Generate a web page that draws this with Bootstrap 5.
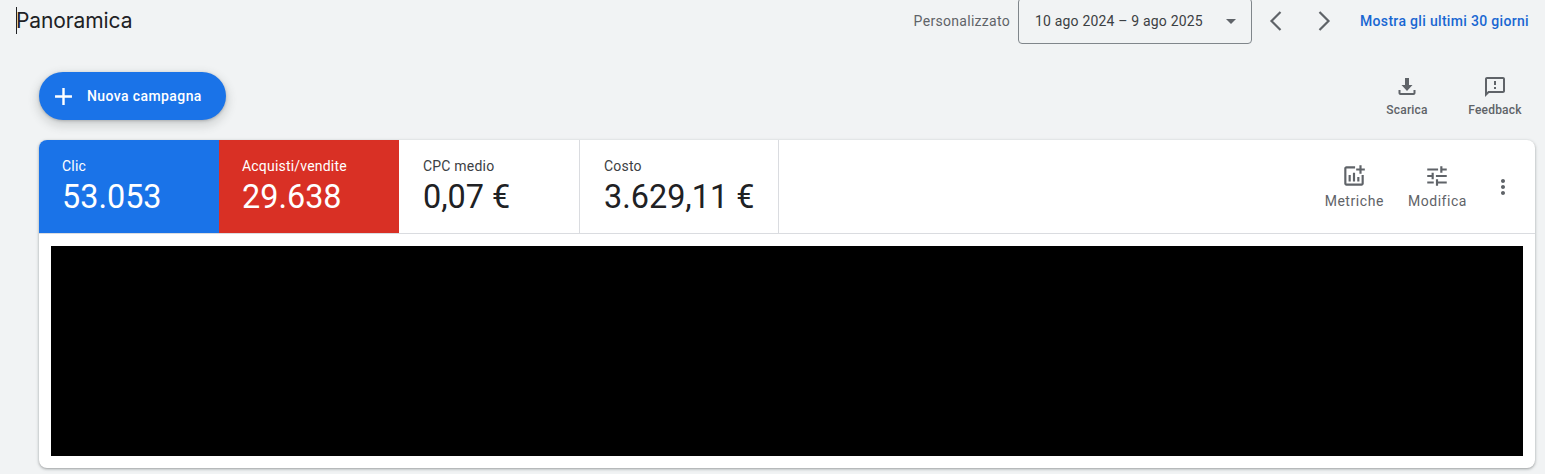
<!DOCTYPE html>
<html lang="it">
<head>
  <meta charset="UTF-8" />
  <meta name="viewport" content="width=device-width, initial-scale=1.0" />
  <title>Panoramica</title>
  <link rel="stylesheet" href="https://cdn.jsdelivr.net/npm/bootstrap@5.3.0/dist/css/bootstrap.min.css" />
  <style>
    body {
      background: #f1f3f4;
      font-family: Roboto, sans-serif;
      color: #202124;
      height: 474px;
      overflow: hidden;
    }
    .top-bar {
      height: 42px;
      padding: 0 16px;
    }
    .page-title {
      font-family: Inter, sans-serif;
      font-size: 21px;
      font-weight: 400;
      line-height: 27px;
      margin: -2px 0 0;
      border-left: 1px solid #202124;
      letter-spacing: -0.1px;
      text-indent: -1px;
    }
    .range-label {
      font-size: 14px;
      color: #5f6368;
      letter-spacing: .3px;
      margin-right: 8px;
    }
    .range-select {
      width: 234px;
      height: 46px;
      border: 1px solid #80868b;
      border-radius: 4px;
      padding: 0 16px;
      font-size: 14px;
      letter-spacing: .18px;
      color: #3c4043;
    }
    .range-arrow { width: 24px; height: 24px; fill: #5f6368; margin-right: -8px; }
    .nav-arrow { width: 24px; height: 24px; fill: none; stroke: #5f6368; stroke-width: 2.2; }
    .arrow-wrap { gap: 24px; margin: 0 24px 0 12px; }
    .last-days {
      font-size: 14px;
      font-weight: 500;
      color: #1967d2;
      letter-spacing: .32px;
      text-decoration: none;
    }
    .action-bar {
      height: 98px;
      padding: 0 6px 0 39px;
    }
    .new-btn {
      width: 187px;
      height: 48px;
      margin-top: 30px;
      border: 0;
      border-radius: 24px;
      background: #1a73e8;
      color: #fff;
      font-size: 14px;
      font-weight: 500;
      letter-spacing: .4px;
      padding: 0 0 0 10px;
      box-shadow: 0 1px 3px rgba(60,64,67,.3), 0 4px 8px 3px rgba(60,64,67,.15);
    }
    .new-btn svg { width: 29px; height: 29px; fill: #fff; margin-right: 9px; }
    .tool-btn {
      width: 88px;
      padding-top: 33px;
      font-size: 12px;
      font-weight: 500;
      color: #5f6368;
      letter-spacing: .2px;
    }
    .tool-btn svg { width: 24px; height: 24px; fill: #5f6368; margin-bottom: 2px; }
    .summary-card {
      width: 1496px;
      height: 328px;
      margin-left: 39px;
      background: #fff;
      border-radius: 8px;
      overflow: hidden;
      box-shadow: 0 1px 2px rgba(60,64,67,.3), 0 1px 3px 1px rgba(60,64,67,.15);
    }
    .tabs-row {
      height: 94px;
      border-bottom: 1px solid #dadce0;
    }
    .metric-tab {
      width: 180px;
      padding: 17px 0 0 24px;
    }
    .metric-tab.first-ruled { width: 181px; }
    .metric-tab.wide { width: 199px; }
    .metric-tab.ruled { border-right: 1px solid #dadce0; color: #3c4043; }
    .tab-blue { background: #1a73e8; color: #fff; padding-left: 23px; }
    .tab-red { background: #d93025; color: #fff; padding-left: 23px; }
    .metric-name { font-size: 14px; line-height: 18px; letter-spacing: .2px; }
    .metric-value { font-size: 32.4px; line-height: 40px; margin-top: 2px; }
    .metric-tab.ruled .metric-value { color: #202124; }
    .tab-tools { padding-right: 20px; }
    .tab-tool {
      font-size: 14px;
      color: #5f6368;
      letter-spacing: .55px;
      margin-left: 24px;
    }
    .tab-tool svg { width: 26px; height: 26px; fill: #5f6368; margin-top: 1px; margin-bottom: 2px; }
    .more-icon { width: 24px; height: 24px; fill: #5f6368; margin-left: 24px; }
    .chart-mask {
      height: 210px;
      margin: 12px;
      background: #000;
    }
  </style>
</head>
<body>
  <div class="top-bar d-flex align-items-center">
    <h1 class="page-title">Panoramica</h1>
    <div class="d-flex align-items-center ms-auto">
      <span class="range-label">Personalizzato</span>
      <div class="range-select d-flex align-items-center justify-content-between">
        <span>10 ago 2024 – 9 ago 2025</span>
        <svg class="range-arrow" viewBox="0 0 24 24"><path d="M7 10l5 5 5-5z"/></svg>
      </div>
      <div class="arrow-wrap d-flex">
        <svg class="nav-arrow" viewBox="0 0 24 24"><path d="M16.500 3l-9 9 9 9"/></svg>
        <svg class="nav-arrow" viewBox="0 0 24 24"><path d="M7.500 3l9 9-9 9"/></svg>
      </div>
      <a class="last-days" href="#">Mostra gli ultimi 30 giorni</a>
    </div>
  </div>

  <div class="action-bar d-flex align-items-start justify-content-between">
    <button class="new-btn d-flex align-items-center" type="button">
      <svg viewBox="0 0 24 24"><path d="M19 13h-6v6h-2v-6H5v-2h6V5h2v6h6v2z"/></svg>
      Nuova campagna
    </button>
    <div class="d-flex">
      <div class="tool-btn d-flex flex-column align-items-center">
        <svg viewBox="0 0 24 24"><path d="M18.500 15v3h-13v-3h-2v3c0 1.100.9 2 2 2h13c1.100 0 2-.9 2-2v-3h-2zM17.500 10H14V3h-4v7H6.500l5.500 6z"/></svg>
        <span>Scarica</span>
      </div>
      <div class="tool-btn d-flex flex-column align-items-center">
        <svg viewBox="0 0 24 24"><path d="M20 2H4c-1.100 0-2 .9-2 2v18l4-4h14c1.100 0 2-.9 2-2V4c0-1.100-.9-2-2-2zm0 14H5.170L4 17.170V4h16v12zM11 12h2v2h-2zm0-6h2v4h-2z"/></svg>
        <span>Feedback</span>
      </div>
    </div>
  </div>

  <div class="summary-card">
    <div class="tabs-row d-flex">
      <div class="metric-tab tab-blue">
        <div class="metric-name">Clic</div>
        <div class="metric-value">53.053</div>
      </div>
      <div class="metric-tab tab-red">
        <div class="metric-name">Acquisti/vendite</div>
        <div class="metric-value">29.638</div>
      </div>
      <div class="metric-tab first-ruled ruled">
        <div class="metric-name">CPC medio</div>
        <div class="metric-value">0,07 €</div>
      </div>
      <div class="metric-tab wide ruled">
        <div class="metric-name">Costo</div>
        <div class="metric-value">3.629,11 €</div>
      </div>
      <div class="tab-tools d-flex align-items-center ms-auto">
        <div class="tab-tool d-flex flex-column align-items-center">
          <svg viewBox="0 0 24 24"><path d="M22 5v2h-3v3h-2V7h-3V5h3V2h2v3h3zm-3 14H5V5h8V3H5c-1.100 0-2 .9-2 2v14c0 1.100.9 2 2 2h14c1.100 0 2-.9 2-2v-8h-2v8zm-4-6v4h2v-4h-2zm-4 4h2V9h-2v8zm-2 0v-6H7v6h2z"/></svg>
          <span>Metriche</span>
        </div>
        <div class="tab-tool d-flex flex-column align-items-center">
          <svg viewBox="0 0 24 24"><path d="M3 17v2h6v-2H3zM3 5v2h10V5H3zm10 16v-2h8v-2h-8v-2h-2v6h2zM7 9v2H3v2h4v2h2V9H7zm14 4v-2H11v2h10zm-6-4h2V7h4V5h-4V3h-2v6z"/></svg>
          <span>Modifica</span>
        </div>
        <svg class="more-icon" viewBox="0 0 24 24"><path d="M12 8c1.100 0 2-.9 2-2s-.9-2-2-2-2 .9-2 2 .9 2 2 2zm0 2c-1.100 0-2 .9-2 2s.9 2 2 2 2-.9 2-2-.9-2-2-2zm0 6c-1.100 0-2 .9-2 2s.9 2 2 2 2-.9 2-2-.9-2-2-2z"/></svg>
      </div>
    </div>
    <div class="chart-mask"></div>
  </div>
</body>
</html>
